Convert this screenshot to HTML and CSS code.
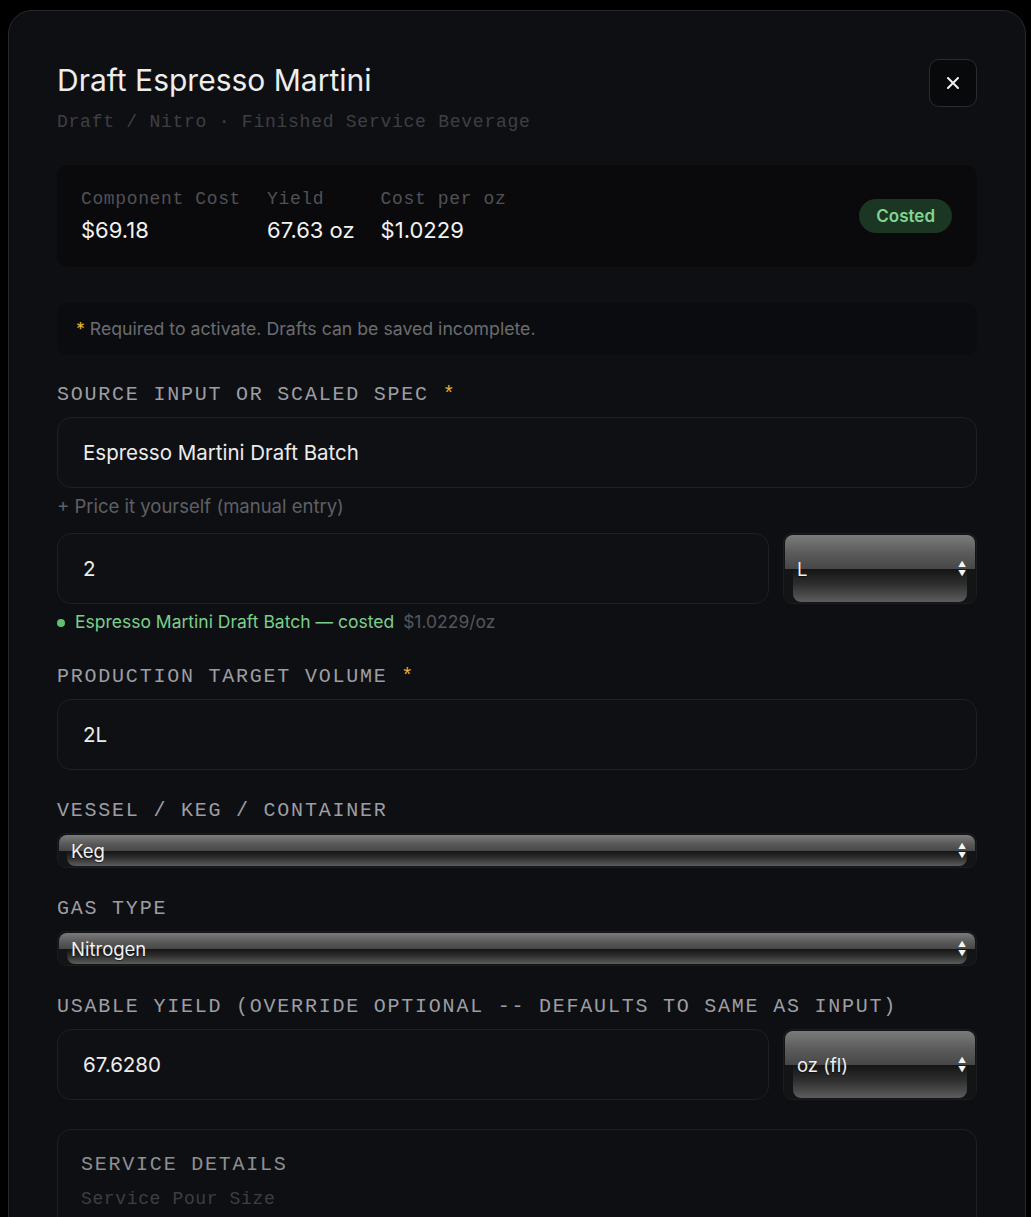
FILE: index.html
```html
<!DOCTYPE html>
<html lang="en">
<head>
  <meta charset="UTF-8">
  <title>Draft Espresso Martini</title>
  <link rel="stylesheet" href="styles.css">
</head>
<body>
<div class="modal">
  <div class="modal-head">
    <div class="head-text">
      <h1 class="title">Draft Espresso Martini</h1>
      <div class="subtitle">Draft / Nitro · Finished Service Beverage</div>
    </div>
    <button class="close" type="button">
      <svg width="12" height="12" viewBox="0 0 12 12"><path d="M1 1L11 11M11 1L1 11" stroke="#f2f2f2" stroke-width="2" stroke-linecap="round"/></svg>
    </button>
  </div>

  <div class="stats">
    <div class="stat">
      <div class="stat-label">Component Cost</div>
      <div class="stat-value">$69.18</div>
    </div>
    <div class="stat">
      <div class="stat-label">Yield</div>
      <div class="stat-value">67.63 oz</div>
    </div>
    <div class="stat">
      <div class="stat-label">Cost per oz</div>
      <div class="stat-value">$1.0229</div>
    </div>
    <span class="badge">Costed</span>
  </div>

  <div class="note"><span class="req">*</span> Required to activate. Drafts can be saved incomplete.</div>

  <div class="field first">
    <div class="label">Source Input or Scaled Spec <span class="req">*</span></div>
    <div class="input">Espresso Martini Draft Batch</div>
    <div class="manual">+ Price it yourself (manual entry)</div>
    <div class="row">
      <div class="input">2</div>
      <div class="sel tall">
        <div class="sel-top"></div>
        <div class="sel-bot"></div>
        <span class="sel-text">L</span>
        <span class="sel-arrows">&#9650;<br>&#9660;</span>
      </div>
    </div>
    <div class="status"><span class="dot"></span>Espresso Martini Draft Batch — costed <span class="status-price">$1.0229/oz</span></div>
  </div>

  <div class="field gap-lg">
    <div class="label">Production Target Volume <span class="req">*</span></div>
    <div class="input">2L</div>
  </div>

  <div class="field">
    <div class="label">Vessel / Keg / Container</div>
    <div class="sel">
      <div class="sel-top"></div>
      <div class="sel-bot"></div>
      <span class="sel-text">Keg</span>
      <span class="sel-arrows">&#9650;<br>&#9660;</span>
    </div>
  </div>

  <div class="field">
    <div class="label">Gas Type</div>
    <div class="sel">
      <div class="sel-top"></div>
      <div class="sel-bot"></div>
      <span class="sel-text">Nitrogen</span>
      <span class="sel-arrows">&#9650;<br>&#9660;</span>
    </div>
  </div>

  <div class="field">
    <div class="label">Usable Yield (Override optional -- defaults to same as input)</div>
    <div class="row">
      <div class="input">67.6280</div>
      <div class="sel tall">
        <div class="sel-top"></div>
        <div class="sel-bot"></div>
        <span class="sel-text">oz (fl)</span>
        <span class="sel-arrows">&#9650;<br>&#9660;</span>
      </div>
    </div>
  </div>

  <div class="service">
    <div class="label">Service Details</div>
    <div class="service-sub">Service Pour Size</div>
  </div>
</div>
</body>
</html>
```
FILE: styles.css
```css
* {
  box-sizing: border-box;
  margin: 0;
  padding: 0;
}

body {
  background: #000;
  font-family: "Inter", "Noto Sans", sans-serif;
  color: #ececec;
}

.modal {
  margin: 10px 5px 0 8px;
  min-height: 1300px;
  padding: 48px 48px 60px;
  background: #0e0f13;
  border: 1px solid #28292d;
  border-radius: 24px;
}

/* header */
.modal-head {
  display: flex;
  justify-content: space-between;
  align-items: flex-start;
}

.title {
  margin-top: 3px;
  font-size: 30px;
  line-height: 36px;
  font-weight: 400;
  color: #ededed;
}

.subtitle {
  margin-top: 13px;
  font-family: "Liberation Mono", monospace;
  font-size: 18px;
  line-height: 22px;
  letter-spacing: 0.75px;
  color: #3e3f44;
}

.close {
  width: 48px;
  height: 48px;
  display: flex;
  align-items: center;
  justify-content: center;
  background: #08090b;
  border: 1px solid #2b2c31;
  border-radius: 10px;
}

/* cost summary */
.stats {
  margin-top: 32px;
  display: flex;
  align-items: center;
  gap: 26px;
  padding: 23px 25px 23px 24px;
  background: #0a0a0d;
  border-radius: 12px;
}

.stat-label {
  font-family: "Liberation Mono", monospace;
  font-size: 18px;
  line-height: 22px;
  letter-spacing: 0.63px;
  color: #505156;
}

.stat-value {
  margin-top: 6px;
  font-size: 22px;
  line-height: 28px;
  color: #f2f2f2;
}

.badge {
  margin-left: auto;
  height: 34px;
  padding: 0 17px;
  display: flex;
  align-items: center;
  border-radius: 17px;
  background: #1b3623;
  color: #80d690;
  font-size: 17px;
  font-weight: 600;
}

.note {
  margin-top: 36px;
  padding: 14px 19px;
  line-height: 24px;
  font-size: 17.7px;
  color: #6b6c71;
  background: #0b0c0f;
  border-radius: 10px;
}

.req {
  color: #e5b43a;
}

/* form fields */
.field {
  margin-top: 30px;
}

.field.first {
  margin-top: 29px;
}

.field.gap-lg {
  margin-top: 33px;
}

.label {
  font-family: "Liberation Mono", monospace;
  font-size: 20px;
  line-height: 22px;
  letter-spacing: 1.77px;
  text-transform: uppercase;
  color: #9d9ea3;
  margin-bottom: 11px;
}

.input {
  height: 71px;
  padding: 0 25px;
  display: flex;
  align-items: center;
  background: #0f1014;
  border: 1px solid #1f2025;
  border-radius: 14px;
  font-size: 20.5px;
  color: #ececec;
}

.manual {
  margin-top: 6px;
  font-size: 18.5px;
  line-height: 24px;
  color: #5f6065;
}

.row {
  display: flex;
  gap: 14px;
}

.manual + .row {
  margin-top: 15px;
}

.row .input {
  flex: 1;
}

.status {
  margin-top: 7px;
  display: flex;
  align-items: center;
  font-size: 17.5px;
  line-height: 22px;
  color: #7bcf8b;
}

.dot {
  width: 8px;
  height: 8px;
  margin: 1px 10px 0 0;
  border-radius: 50%;
  background: #5fc070;
}

.status-price {
  margin-left: 9px;
  color: #55565b;
}

/* glossy native-looking select */
.sel {
  position: relative;
  height: 35px;
  display: flex;
  flex-direction: column;
  background: #131416;
  border: 1px solid #1b1c1f;
  border-radius: 9px;
}

.sel.tall {
  width: 194px;
  height: 71px;
}

.sel-top {
  flex: 1;
  margin: 1px 1px 0;
  border-radius: 8px 8px 0 0;
  background: linear-gradient(#7b7b7b, #5a5a5a 55%, #474747);
}

.sel-bot {
  flex: 1;
  margin: 0 9px 1px;
  border-radius: 0 0 8px 8px;
  background: linear-gradient(#141414, #2e2e2e 45%, #5c5c5c);
}

.sel-text {
  position: absolute;
  left: 13px;
  top: 50%;
  transform: translateY(-50%);
  font-size: 18.5px;
  color: #f0f0f0;
  text-shadow: 0 1px 1px rgba(0, 0, 0, 0.5);
}

.sel-arrows {
  position: absolute;
  right: 10px;
  top: 50%;
  transform: translateY(-50%);
  font-size: 8px;
  line-height: 9px;
  color: #f4f4f4;
}

/* service details */
.service {
  margin-top: 29px;
  min-height: 160px;
  padding: 24px 23px;
  border: 1px solid #1f2025;
  border-radius: 14px;
}

.service .label {
  color: #8e8f94;
  margin-bottom: 12px;
}

.service-sub {
  font-family: "Liberation Mono", monospace;
  font-size: 18px;
  line-height: 22px;
  letter-spacing: 0.63px;
  color: #3d3e43;
}
```
